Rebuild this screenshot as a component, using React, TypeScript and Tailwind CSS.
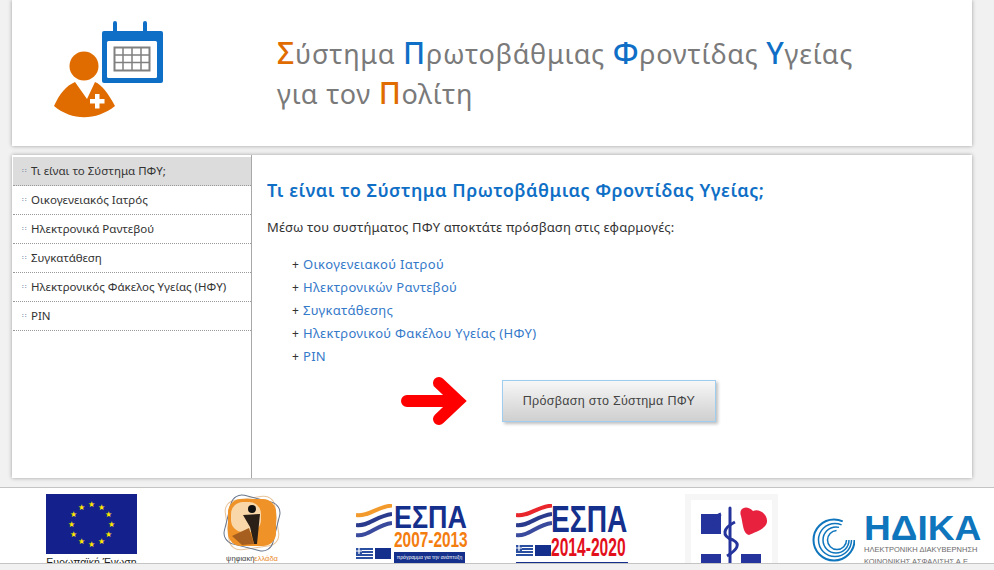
// App.tsx
import React from "react";

const menuItems = [
  "Τι είναι το Σύστημα ΠΦΥ;",
  "Οικογενειακός Ιατρός",
  "Ηλεκτρονικά Ραντεβού",
  "Συγκατάθεση",
  "Ηλεκτρονικός Φάκελος Υγείας (ΗΦΥ)",
  "PIN",
];

const appLinks = [
  "Οικογενειακού Ιατρού",
  "Ηλεκτρονικών Ραντεβού",
  "Συγκατάθεσης",
  "Ηλεκτρονικού Φακέλου Υγείας (ΗΦΥ)",
  "PIN",
];

const HeaderLogo = () => (
  <svg width="112" height="100" viewBox="0 0 112 100" className="shrink-0">
    {/* calendar */}
    <rect x="48" y="12" width="61" height="52" rx="2" fill="#0f6fc6" />
    <rect x="53" y="22" width="50" height="37" rx="1.500" fill="#fff" />
    <path d="M61 4v13M91 4v13" stroke="#0f6fc6" strokeWidth="4" strokeLinecap="round" />
    <path d="M60.500 28.500h35v23h-35z" fill="#fff" stroke="#808080" strokeWidth="2" />
    <path d="M69 29v22M78 29v22M87 29v22M60 36h36M60 43.500h36" stroke="#808080" strokeWidth="1.500" />
    {/* person */}
    <circle cx="30" cy="47" r="14.500" fill="#e06c00" />
    <path d="M21 63 L33 80 L41 63 C48 66 54 74 61 87 C42 102 18 102 0 87 C6 74 12 67 21 63 Z" fill="#e06c00" />
    <path d="M41 75h4.500v5h5v4.500h-5v5h-4.500v-5h-5v-4.500h5z" fill="#fff" />
  </svg>
);

const EuFlag = () => {
  const stars = Array.from({ length: 12 }, (_, i) => {
    const a = (i * Math.PI) / 6;
    return { x: 45 + 20 * Math.sin(a), y: 30 - 20 * Math.cos(a) };
  });
  return (
    <svg width="91" height="60" viewBox="0 0 91 60" className="block">
      <rect width="91" height="60" fill="#14218c" />
      {stars.map((s, i) => (
        <text key={i} x={s.x} y={s.y + 3} textAnchor="middle" fontSize="8" fill="#ffe600">
          ★
        </text>
      ))}
    </svg>
  );
};

const DigitalGreeceMark = () => (
  <svg width="60" height="60" viewBox="0 0 60 60" className="block">
    <rect x="5" y="4" width="50" height="50" rx="11" fill="none" stroke="#e8c49a" strokeWidth="1" transform="rotate(-8 30 29)" />
    <rect x="5" y="4" width="50" height="50" rx="11" fill="none" stroke="#67758c" strokeWidth="1" transform="rotate(14 30 29)" />
    <rect x="6" y="5" width="48" height="47" rx="13" fill="#ef9328" />
    <rect x="9" y="8" width="30" height="30" rx="12" fill="#fad7a8" />
    <circle cx="30" cy="15" r="4" fill="#111" />
    <path d="M21 21 L38 20 L35 50 L32 50 L28 33 Z" fill="#2b2018" />
    <path d="M10 42 L27 34 L32 50 L20 51 Z" fill="#a65f1e" />
  </svg>
);

const Waves = ({ top }: { top: string }) => (
  <svg width="36" height="34" viewBox="0 0 36 34" className="block">
    <path d="M0 11 C12 13 20 3 36 1.500" fill="none" stroke={top} strokeWidth="4" />
    <path d="M0 21 C12 23 20 12 36 10" fill="none" stroke="#2a3a8c" strokeWidth="4" />
    <path d="M0 31 C12 33 20 21 36 19" fill="none" stroke="#3a4a9c" strokeWidth="4" />
  </svg>
);

const MiniFlags = () => (
  <div className="flex gap-[2px]">
    <svg width="17" height="11" viewBox="0 0 17 11" className="block">
      <rect width="17" height="11" fill="#2a4fa0" />
      <path d="M0 2.500h17M0 5.500h17M0 8.500h17" stroke="#fff" strokeWidth="1.100" />
      <rect width="6" height="6" fill="#2a4fa0" />
      <path d="M3 0v6M0 3h6" stroke="#fff" strokeWidth="1.200" />
    </svg>
    <div className="w-[16px] h-[11px] bg-[#14308c]" />
  </div>
);

const EspaOld = () => (
  <div className="flex gap-[2px] w-[112px] font-['Liberation_Sans',sans-serif]">
    <div className="w-[36px] shrink-0 flex flex-col gap-[10px]">
      <Waves top="#f39a2c" />
      <MiniFlags />
    </div>
    <div className="w-[74px] shrink-0 flex flex-col items-start">
      <span className="text-[#14308c] font-bold text-[32px] leading-[26px] whitespace-nowrap scale-x-[0.84] origin-left">ΕΣΠΑ</span>
      <span className="text-[#f47d0f] font-bold text-[22px] leading-[20px] whitespace-nowrap scale-x-[0.7] origin-left">2007-2013</span>
      <span className="bg-[#14308c] text-white text-[5px] leading-[11px] w-[71px] h-[11px] text-center whitespace-nowrap mt-[2px]">πρόγραμμα για την ανάπτυξη</span>
    </div>
  </div>
);

const EspaNew = () => (
  <div className="w-[112px] font-['Liberation_Sans',sans-serif]">
    <div className="flex">
      <div className="w-[35px] shrink-0 flex flex-col gap-[7px]">
        <Waves top="#e8262c" />
        <MiniFlags />
      </div>
      <div className="w-[77px] shrink-0 flex flex-col items-start">
        <span className="text-[#14308c] font-bold text-[37px] leading-[31px] whitespace-nowrap scale-x-[0.76] origin-left">ΕΣΠΑ</span>
        <span className="text-[#e3101c] font-bold text-[26px] leading-[24px] whitespace-nowrap scale-x-[0.6] origin-left">2014-2020</span>
      </div>
    </div>
    <div className="h-[2px] mt-[3px] bg-[#14308c]" />
  </div>
);

const MinistryMark = () => (
  <div className="bg-[#f6f6f6] pt-[6px] px-[6px] w-[93px] h-[72px]">
    <svg width="81" height="66" viewBox="0 0 81 66" className="block bg-white">
      <rect x="10" y="14" width="20" height="20" fill="#24349c" />
      <rect x="10" y="54" width="20" height="12" fill="#24349c" />
      <rect x="50" y="54" width="20" height="12" fill="#24349c" />
      <path d="M50 16 C47 8 56 4 62 11 C68 8 77 14 76 22 C75 29 64 32 58 35 C52 34 52 24 50 16 Z" fill="#e8213f" />
      <path d="M39 8v56" stroke="#24349c" strokeWidth="3" strokeLinecap="round" />
      <path d="M30 14c-6 2 -8 8 -6 12M44 22 C32 28 30 36 42 40 C50 44 46 50 36 56" fill="none" stroke="#24349c" strokeWidth="3" />
    </svg>
  </div>
);

const HdikaMark = () => (
  <div className="flex gap-[9px] w-[170px] items-start">
    <svg width="43" height="56" viewBox="0 0 43 56" className="block shrink-0">
      <circle cx="22" cy="27" r="20.500" fill="none" stroke="#0f75bd" strokeWidth="2" strokeDasharray="105 24" />
      <circle cx="23" cy="27" r="16.500" fill="none" stroke="#0f75bd" strokeWidth="1.500" strokeDasharray="84 20" />
      <circle cx="24" cy="27" r="13" fill="none" stroke="#0f75bd" strokeWidth="1.500" strokeDasharray="64 18" />
      <circle cx="25" cy="27" r="9.500" fill="none" stroke="#0f75bd" strokeWidth="1.500" strokeDasharray="44 16" />
    </svg>
    <div className="w-[116px] flex flex-col items-start font-['Liberation_Sans',sans-serif] pt-[1px]">
      <span className="text-[#0f75bd] font-bold text-[35px] leading-[28px] scale-x-[1.06] origin-left">ΗΔΙΚΑ</span>
      <span className="text-[#6b6b6b] text-[7.500px] leading-[10px] mt-[3px] whitespace-nowrap">ΗΛΕΚΤΡΟΝΙΚΗ ΔΙΑΚΥΒΕΡΝΗΣΗ</span>
      <span className="text-[#6b6b6b] text-[7.500px] leading-[10px] mt-[2px] whitespace-nowrap">ΚΟΙΝΩΝΙΚΗΣ ΑΣΦΑΛΙΣΗΣ Α.Ε.</span>
    </div>
  </div>
);

export default function App() {
  return (
    <div className="w-[994px] h-[570px] overflow-hidden bg-[#f1f1f1] font-['Noto_Sans',sans-serif]">
      {/* header */}
      <div className="mx-[12px] w-[960px] h-[146px] bg-white shadow-[0_0_4px_rgba(0,0,0,0.35)] flex items-start pl-[42px] pt-[19px]">
        <HeaderLogo />
        <div className="ml-[111px] pt-[15px] text-[27px] leading-[40px] text-[#7a7a7a] tracking-[0.75px]">
          <div>
            <span className="text-[#e06c00] font-medium text-[30px] leading-none">Σ</span>ύστημα{" "}
            <span className="text-[#0f6fc6] font-medium text-[30px] leading-none">Π</span>ρωτοβάθμιας{" "}
            <span className="text-[#0f6fc6] font-medium text-[30px] leading-none">Φ</span>ροντίδας{" "}
            <span className="text-[#0f6fc6] font-medium text-[30px] leading-none">Υ</span>γείας
          </div>
          <div>
            για τον <span className="text-[#e06c00] font-medium text-[30px] leading-none">Π</span>ολίτη
          </div>
        </div>
      </div>

      {/* content */}
      <div className="mt-[9px] mx-[12px] w-[960px] h-[323px] bg-white shadow-[0_0_4px_rgba(0,0,0,0.35)] flex">
        <nav className="w-[240px] shrink-0 border-r border-[#a8a8a8] pt-[2px] pl-[1px]">
          {menuItems.map((item, i) => (
            <div
              key={item}
              className={`h-[29px] flex items-center pl-[9px] pb-[1px] border-b border-dotted border-[#999] text-[11.500px] text-[#333] ${
                i === 0 ? "bg-[#dcdcdc]" : ""
              }`}
            >
              <span className="w-[9px] text-[#5a7a9a] text-[7px] leading-none">∷</span>
              <span>{item}</span>
            </div>
          ))}
        </nav>
        <main className="flex-1 pl-[15px] pt-[22px]">
          <h1 className="text-[18px] leading-[26px] font-semibold text-[#0f6fc6] tracking-[0.5px]">
            Τι είναι το Σύστημα Πρωτοβάθμιας Φροντίδας Υγείας;
          </h1>
          <p className="mt-[14px] text-[13px] leading-[20px] text-[#333] tracking-[0.15px]">
            Μέσω του συστήματος ΠΦΥ αποκτάτε πρόσβαση στις εφαρμογές:
          </p>
          <ul className="mt-[16px] ml-[25px]">
            {appLinks.map((link) => (
              <li key={link} className="h-[23px] flex items-center text-[13px] tracking-[0.3px]">
                <span className="w-[11px] text-[#333] text-[12px]">+</span>
                <span className="text-[#3579c9]">{link}</span>
              </li>
            ))}
          </ul>
          <div className="mt-[9px] flex items-center pl-[134px]">
            <svg width="66" height="48" viewBox="0 0 66 48" className="shrink-0">
              <path d="M6 24H56M38 6L57 24L38 42" fill="none" stroke="#ff0000" strokeWidth="12" strokeLinecap="round" />
              <path d="M58 24L44 6L44 42Z" fill="#ff0000" />
            </svg>
            <button className="ml-[35px] w-[214px] h-[42px] border border-[#9fcdf0] bg-gradient-to-b from-[#f7f7f7] to-[#cfcfcf] shadow-[2px_2px_3px_rgba(0,0,0,0.25)] text-[12.500px] text-[#444] font-['Liberation_Sans',sans-serif] tracking-[0.3px]">
              Πρόσβαση στο Σύστημα ΠΦΥ
            </button>
          </div>
        </main>
      </div>

      {/* footer logos */}
      <div className="mt-[9px] h-[77px] overflow-hidden bg-white border-y border-[#c4c4c4] flex items-start pt-[6px]">
        <div className="ml-[46px] w-[91px] shrink-0">
          <EuFlag />
          <div className="text-center text-[10.500px] leading-[13px] text-[#222] whitespace-nowrap font-['Liberation_Sans',sans-serif] mt-[2px]">Ευρωπαϊκή Ένωση</div>
        </div>
        <div className="ml-[85px] w-[60px] shrink-0 flex flex-col items-center">
          <DigitalGreeceMark />
          <div className="text-[7.500px] leading-[10px] text-[#444] whitespace-nowrap font-['Liberation_Sans',sans-serif]">
            ψηφιακή<span className="text-[#e88a2a]">ελλάδα</span>
          </div>
        </div>
        <div className="ml-[74px] mt-[10px] shrink-0">
          <EspaOld />
        </div>
        <div className="ml-[48px] mt-[10px] shrink-0">
          <EspaNew />
        </div>
        <div className="ml-[57px] shrink-0">
          <MinistryMark />
        </div>
        <div className="ml-[34px] shrink-0 mt-[19px]">
          <HdikaMark />
        </div>
      </div>
    </div>
  );
}
